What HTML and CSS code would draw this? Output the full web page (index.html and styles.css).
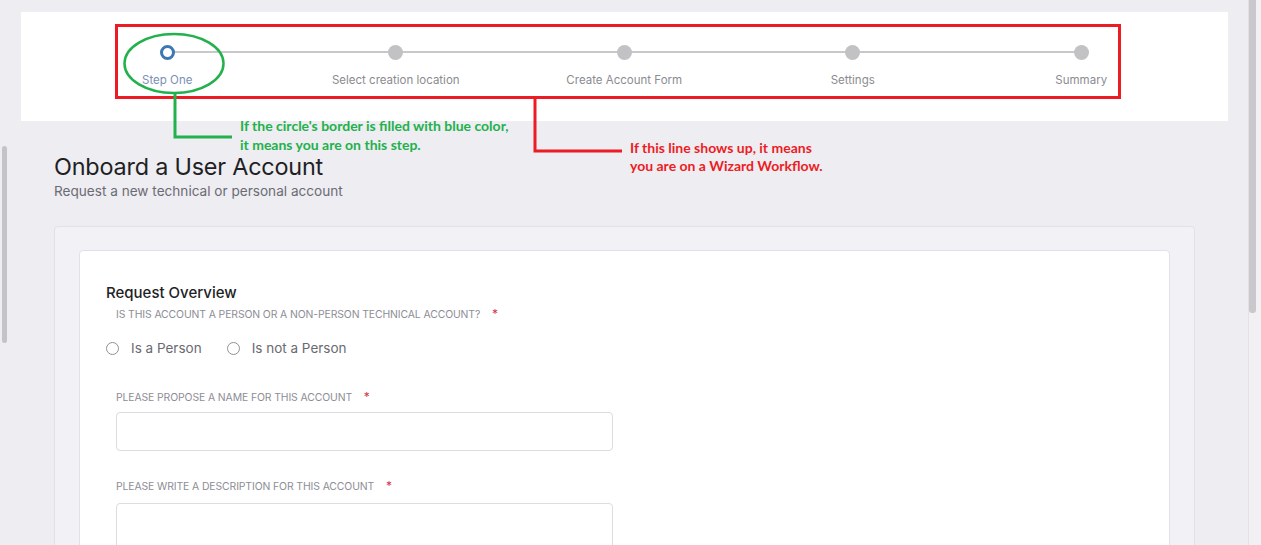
FILE: index.html
```html
<!DOCTYPE html>
<html lang="en">
<head>
<meta charset="utf-8">
<title>Onboard a User Account</title>
<link rel="stylesheet" href="styles.css">
</head>
<body>
<div class="screen">
  <main class="main">
    <section class="wizard">
      <ol class="steps">
        <li class="step active"><span class="dot"></span><span class="step-label">Step One</span></li>
        <li class="step"><span class="dot"></span><span class="step-label">Select creation location</span></li>
        <li class="step"><span class="dot"></span><span class="step-label">Create Account Form</span></li>
        <li class="step"><span class="dot"></span><span class="step-label">Settings</span></li>
        <li class="step"><span class="dot"></span><span class="step-label">Summary</span></li>
      </ol>
    </section>

    <div class="content">
      <header class="page-head">
        <h1 class="title">Onboard a User Account</h1>
        <p class="subtitle">Request a new technical or personal account</p>
      </header>

      <div class="outer-card">
        <form class="inner-card">
          <h2 class="section-title">Request Overview</h2>
          <div class="field-label q">IS THIS ACCOUNT A PERSON OR A NON-PERSON TECHNICAL ACCOUNT? <span class="req">*</span></div>
          <div class="radios">
            <label class="radio"><span class="radio-circle"></span>Is a Person</label>
            <label class="radio"><span class="radio-circle"></span>Is not a Person</label>
          </div>
          <div class="field">
            <div class="field-label">PLEASE PROPOSE A NAME FOR THIS ACCOUNT <span class="req">*</span></div>
            <div class="input"></div>
          </div>
          <div class="field">
            <div class="field-label">PLEASE WRITE A DESCRIPTION FOR THIS ACCOUNT <span class="req">*</span></div>
            <div class="textarea"></div>
          </div>
        </form>
      </div>
    </div>
  </main>
  <div class="scrollbar"><div class="thumb"></div></div>

  <div class="left-bar"></div>

  <svg class="annot" width="1261" height="545" viewBox="0 0 1261 545">
    <rect x="116.5" y="25.5" width="1003" height="72" fill="none" stroke="#ed1c24" stroke-width="3"/>
    <polyline points="535,99 535,151 622,151" fill="none" stroke="#ed1c24" stroke-width="3"/>
    <ellipse cx="174" cy="63.5" rx="49.5" ry="29.5" fill="none" stroke="#22b14c" stroke-width="2.5"/>
    <polyline points="175,93 175,137 232,137" fill="none" stroke="#22b14c" stroke-width="3"/>
  </svg>
  <div class="note note-green">If the circle's border is filled with blue color,<br>it means you are on this step.</div>
  <div class="note note-red">If this line shows up, it means<br>you are on a Wizard Workflow.</div>
</div>
</body>
</html>
```

FILE: styles.css
```css
* { box-sizing: border-box; }
html, body { margin: 0; padding: 0; }
body {
  width: 1261px;
  height: 545px;
  overflow: hidden;
  background: #ededf2;
  font-family: Inter, "Noto Sans", sans-serif;
}
.screen {
  position: relative;
  display: flex;
  width: 1261px;
  height: 545px;
  overflow: hidden;
}
.main {
  width: 1248px;
  height: 545px;
  overflow: hidden;
  padding: 12px 20px 0 21px;
}
.wizard {
  background: #ffffff;
  height: 109px;
  padding: 33px 0 0 32px;
}
.steps {
  list-style: none;
  margin: 0;
  padding: 0;
  display: flex;
}
.step {
  position: relative;
  width: 228.5px;
  display: flex;
  flex-direction: column;
  align-items: center;
}
.step + .step::before {
  content: "";
  position: absolute;
  top: 6px;
  left: -50%;
  width: 100%;
  height: 2px;
  background: #c8c8cb;
}
.dot {
  position: relative;
  z-index: 1;
  width: 15px;
  height: 15px;
  border-radius: 50%;
  background: #c2c2c5;
}
.step.active .dot {
  background: #ffffff;
  border: 3px solid #3c78b4;
}
.step-label {
  margin-top: 13px;
  font-size: 11.5px;
  color: #8b8b90;
  white-space: nowrap;
}
.step.active .step-label { color: #7b90b6; }

.content { padding: 0 33px; }
.page-head { padding-top: 32px; }
.title {
  margin: 0;
  font-size: 23.4px;
  line-height: 28px;
  font-weight: 400;
  color: #1f1f24;
  letter-spacing: -0.2px;
}
.subtitle {
  margin: 1px 0 0;
  font-size: 13.6px;
  line-height: 18px;
  color: #6b6b72;
}
.outer-card {
  margin-top: 26px;
  background: #f2f2f6;
  border: 1px solid #e1e1e6;
  border-radius: 4px;
  padding: 23px 24px 0;
  height: 330px;
}
.inner-card {
  background: #ffffff;
  border: 1px solid #e2e2e6;
  border-radius: 4px;
  padding: 32px 26px 0;
  height: 320px;
}
.section-title {
  margin: 0;
  font-size: 15px;
  line-height: 20px;
  font-weight: 500;
  color: #222226;
}
.field-label {
  margin-left: 10px;
  font-size: 10.4px;
  line-height: 14px;
  color: #8d8d96;
  letter-spacing: -0.1px;
}
.field-label.q { margin-top: 4px; }
.req {
  color: #d2334e;
  margin-left: 9px;
  font-size: 12px;
}
.radios {
  display: flex;
  gap: 25px;
  margin-top: 17px;
}
.radio {
  display: flex;
  align-items: center;
  gap: 12px;
  font-size: 13.5px;
  line-height: 18px;
  color: #6a6a72;
}
.radio-circle {
  width: 13px;
  height: 13px;
  border: 1px solid #8f8f96;
  border-radius: 50%;
  background: #fff;
}
.field { margin-top: 33px; }
.field + .field { margin-top: 28px; }
.input, .textarea {
  margin: 7px 0 0 10px;
  width: 497px;
  height: 39px;
  border: 1px solid #dcdce1;
  border-radius: 4px;
  background: #fff;
}
.textarea { margin-top: 9px; height: 80px; }

.scrollbar {
  width: 13px;
  height: 545px;
  background: #f1f1f4;
  border-left: 1px solid #e2e2e6;
}
.thumb {
  width: 7px;
  height: 313px;
  background: #c9c9cd;
  border-radius: 0 0 3px 3px;
}
.left-bar {
  position: absolute;
  left: 2px;
  top: 146px;
  width: 5px;
  height: 197px;
  background: #c4c4c8;
  border-radius: 3px;
}
.annot {
  position: absolute;
  left: 0;
  top: 0;
  pointer-events: none;
}
.note {
  position: absolute;
  font-family: Lato, "Liberation Sans", sans-serif;
  font-weight: 700;
  font-size: 14px;
  line-height: 19px;
}
.note-green { left: 240px; top: 116px; color: #22b14c; }
.note-red { left: 630px; top: 139px; color: #ed1c24; line-height: 18px; }
```
